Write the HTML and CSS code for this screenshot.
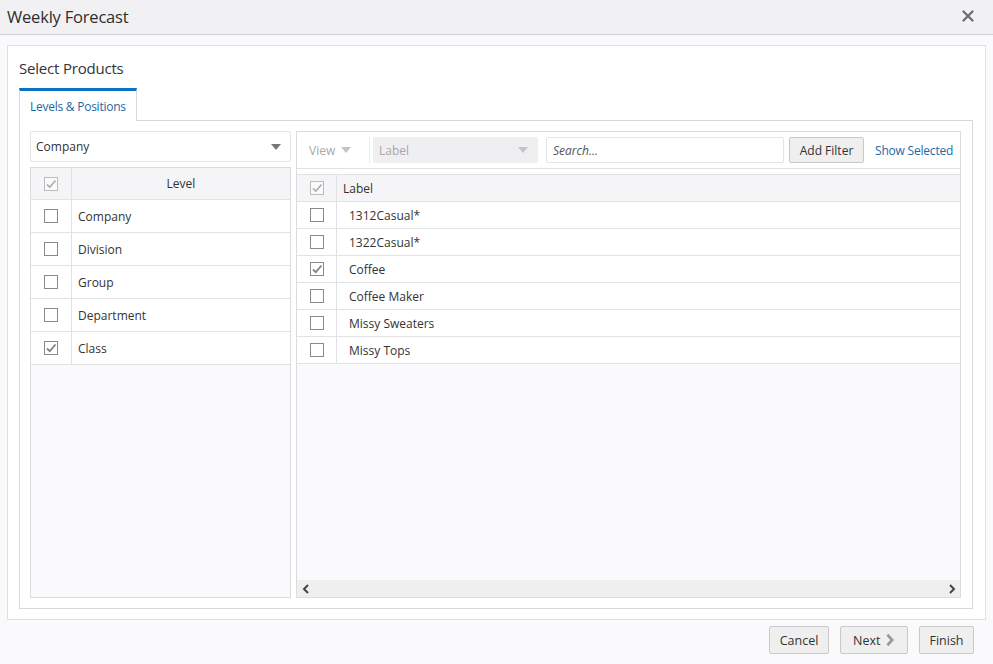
FILE: index.html
```html
<!DOCTYPE html>
<html>
<head>
<meta charset="utf-8">
<link rel="stylesheet" href="styles.css">
</head>
<body>
<div class="header">
  <div class="title">Weekly Forecast</div>
  <div class="close">
    <svg width="12" height="12" viewBox="0 0 12 12"><path d="M1.5 1.5 L10.5 10.5 M10.5 1.5 L1.5 10.5" stroke="#6b6b6b" stroke-width="2.2" stroke-linecap="round"/></svg>
  </div>
</div>
<div class="main">
  <div class="panel">
    <div class="panel-title">Select Products</div>
    <div class="tabs"><div class="tab">Levels &amp; Positions</div></div>
    <div class="tabbox">
      <div class="left">
        <div class="select">
          <span>Company</span>
          <span class="caret dark"></span>
        </div>
        <div class="lgrid">
          <div class="lrow lhead">
            <div class="cbcell"><span class="cb hdr"><svg width="14" height="14" viewBox="0 0 14 14"><path d="M3 7.5 L5.8 10.2 L11.5 3.5" fill="none" stroke="#aaaaaa" stroke-width="1.6"/></svg></span></div>
            <div class="lcell center">Level</div>
          </div>
          <div class="lrow"><div class="cbcell"><span class="cb"></span></div><div class="lcell">Company</div></div>
          <div class="lrow"><div class="cbcell"><span class="cb"></span></div><div class="lcell">Division</div></div>
          <div class="lrow"><div class="cbcell"><span class="cb"></span></div><div class="lcell">Group</div></div>
          <div class="lrow"><div class="cbcell"><span class="cb"></span></div><div class="lcell">Department</div></div>
          <div class="lrow"><div class="cbcell"><span class="cb"><svg width="14" height="14" viewBox="0 0 14 14"><path d="M3 7.5 L5.8 10.2 L11.5 3.5" fill="none" stroke="#858585" stroke-width="1.9"/></svg></span></div><div class="lcell">Class</div></div>
          <div class="lempty"></div>
        </div>
      </div>
      <div class="right">
        <div class="toolbar">
          <div class="view">View <span class="caret light"></span></div>
          <div class="sep"></div>
          <div class="labelsel"><span>Label</span><span class="caret light"></span></div>
          <div class="search">Search...</div>
          <div class="btn addfilter">Add Filter</div>
          <div class="link">Show Selected</div>
        </div>
        <div class="rgrid">
          <div class="rrow rhead">
            <div class="rcb"><span class="cb hdr"><svg width="14" height="14" viewBox="0 0 14 14"><path d="M3 7.5 L5.8 10.2 L11.5 3.5" fill="none" stroke="#aaaaaa" stroke-width="1.6"/></svg></span></div>
            <div class="rcell hd">Label</div>
          </div>
          <div class="rrow"><div class="rcb"><span class="cb"></span></div><div class="rcell">1312Casual*</div></div>
          <div class="rrow"><div class="rcb"><span class="cb"></span></div><div class="rcell">1322Casual*</div></div>
          <div class="rrow"><div class="rcb"><span class="cb"><svg width="14" height="14" viewBox="0 0 14 14"><path d="M3 7.5 L5.8 10.2 L11.5 3.5" fill="none" stroke="#858585" stroke-width="1.9"/></svg></span></div><div class="rcell">Coffee</div></div>
          <div class="rrow"><div class="rcb"><span class="cb"></span></div><div class="rcell">Coffee Maker</div></div>
          <div class="rrow"><div class="rcb"><span class="cb"></span></div><div class="rcell">Missy Sweaters</div></div>
          <div class="rrow"><div class="rcb"><span class="cb"></span></div><div class="rcell">Missy Tops</div></div>
          <div class="rempty"></div>
          <div class="hscroll">
            <svg width="8" height="10" viewBox="0 0 8 10"><path d="M6 1 L2 5 L6 9" fill="none" stroke="#444" stroke-width="2"/></svg>
            <svg width="8" height="10" viewBox="0 0 8 10"><path d="M2 1 L6 5 L2 9" fill="none" stroke="#444" stroke-width="2"/></svg>
          </div>
        </div>
      </div>
    </div>
  </div>
</div>
<div class="footer">
  <div class="btn fbtn">Cancel</div>
  <div class="btn fbtn">Next <svg width="10" height="14" viewBox="0 0 10 14"><path d="M2.5 1.5 L7.5 7 L2.5 12.5" fill="none" stroke="#9a9a9a" stroke-width="2.8"/></svg></div>
  <div class="btn fbtn">Finish</div>
</div>
</body>
</html>
```
FILE: styles.css
```css
* { box-sizing: border-box; }
html, body { margin: 0; padding: 0; }
body {
  background: #fafafc;
  font-family: "Open Sans", "Noto Sans", sans-serif;
  color: #333;
  width: 993px;
  height: 664px;
  overflow: hidden;
}
.header {
  height: 35px;
  background: #f1f1f3;
  border-bottom: 1px solid #d2d2d4;
  display: flex;
  align-items: center;
  justify-content: space-between;
  padding: 0 19px 2px 7px;
}
.title { font-size: 16.5px; color: #2e2e2e; letter-spacing: -0.2px; }
.close { display: flex; align-items: center; }
.main { padding: 10px 7px 0 7px; }
.panel {
  background: #fff;
  border: 1px solid #e0e0e2;
  height: 575px;
  padding: 0 12px 10px 11px;
  display: flex;
  flex-direction: column;
}
.panel-title {
  height: 42px;
  font-size: 15px;
  padding-top: 12px;
  letter-spacing: -0.2px;
}
.tabs { display: flex; height: 32px; }
.tab {
  width: 118px;
  border-top: 3px solid #0a72c1;
  border-left: 1px solid #d8d8da;
  border-right: 1px solid #d8d8da;
  background: #fff;
  color: #1d67a3;
  font-size: 12px;
  letter-spacing: -0.25px;
  padding: 7px 0 0 10px;
  position: relative;
  z-index: 1;
  height: 33px;
  white-space: nowrap;
}
.tabbox {
  flex: 1;
  border: 1px solid #d8d8da;
  padding: 10px 11px 10px 10px;
  display: flex;
  gap: 5px;
}
.left { width: 261px; flex-shrink: 0; display: flex; flex-direction: column; gap: 5px; }
.select {
  height: 31px;
  border: 1px solid #e4e4e6;
  border-radius: 2px;
  display: flex;
  align-items: center;
  justify-content: space-between;
  padding: 0 9px 0 5px;
  font-size: 12px;
}
.caret {
  width: 0; height: 0;
  border-left: 5px solid transparent;
  border-right: 5px solid transparent;
  border-top: 6px solid #777;
  display: inline-block;
}
.caret.light { border-top-color: #c4c4c6; }
.lgrid {
  flex: 1;
  border: 1px solid #dcdcde;
  display: flex;
  flex-direction: column;
}
.lrow {
  height: 33px;
  display: flex;
  border-bottom: 1px solid #e2e2e4;
  font-size: 12px;
}
.lrow.lhead { height: 32px; background: #f5f5f7; }
.cbcell {
  width: 41px;
  border-right: 1px solid #e2e2e4;
  display: flex;
  align-items: center;
  justify-content: center;
}
.lcell { flex: 1; display: flex; align-items: center; padding-left: 6px; }
.lcell.center { justify-content: center; padding-left: 0; }
.lempty { flex: 1; background: #fafafc; }
.cb {
  width: 14px; height: 14px;
  border: 1px solid #8a8a8a;
  background: #fff;
  display: inline-flex;
  align-items: center;
  justify-content: center;
  position: relative;
}
.cb svg { position: absolute; left: -1px; top: -1px; }
.cb.hdr { border-color: #bcbcbc; background: #fafafa; }
.right {
  flex: 1;
  min-width: 0;
  border: 1px solid #dcdcde;
  display: flex;
  flex-direction: column;
}
.toolbar {
  height: 37px;
  border-bottom: 1px solid #e2e2e4;
  display: flex;
  align-items: center;
  padding: 0 0 0 12px;
  font-size: 12px;
  white-space: nowrap;
}
.toolbar > * { flex-shrink: 0; }
.view { color: #a8a8a8; display: flex; align-items: center; gap: 6px; width: 60px; }
.sep { width: 1px; height: 26px; background: #ececee; margin-right: 3px; }
.labelsel {
  width: 165px;
  height: 26px;
  background: #efeff1;
  border-radius: 2px;
  color: #a8a8a8;
  display: flex;
  align-items: center;
  justify-content: space-between;
  padding: 0 10px 0 6px;
}
.search {
  width: 238px;
  height: 26px;
  margin-left: 8px;
  border: 1px solid #e4e4e6;
  border-radius: 2px;
  font-style: italic;
  color: #555;
  display: flex;
  align-items: center;
  padding-left: 6px;
}
.btn {
  background: #efeff0;
  border: 1px solid #c9c9cb;
  border-radius: 2px;
  display: flex;
  align-items: center;
  justify-content: center;
  color: #333;
  white-space: nowrap;
}
.addfilter { width: 75px; height: 26px; margin-left: 5px; font-size: 12px; }
.link { color: #1b6aa5; margin-left: 11px; font-size: 12px; letter-spacing: -0.2px; }
.rgrid {
  flex: 1;
  display: flex;
  flex-direction: column;
  margin-top: 5px;
}
.rrow {
  height: 27px;
  display: flex;
  border-bottom: 1px solid #e2e2e4;
  font-size: 12px;
}
.rrow.rhead { background: #f5f5f7; border-top: 1px solid #e2e2e4; height: 28px; }
.rcb {
  width: 40px;
  border-right: 1px solid #e2e2e4;
  display: flex;
  align-items: center;
  justify-content: center;
}
.rcell { flex: 1; display: flex; align-items: center; padding-left: 12px; }
.rcell.hd { padding-left: 6px; }
.rempty { flex: 1; background: #fafafc; }
.hscroll {
  height: 17px;
  background: #efeff0;
  display: flex;
  align-items: center;
  justify-content: space-between;
  padding: 0 4px 0 5px;
}
.footer {
  display: flex;
  justify-content: flex-end;
  gap: 11px;
  padding: 6px 19px 0 0;
}
.fbtn { height: 28px; font-size: 12.5px; padding: 0 12px; gap: 5px; }
.fbtn:nth-child(1) { width: 60px; }
.fbtn:nth-child(2) { width: 68px; }
.fbtn:nth-child(3) { width: 55px; }
```
